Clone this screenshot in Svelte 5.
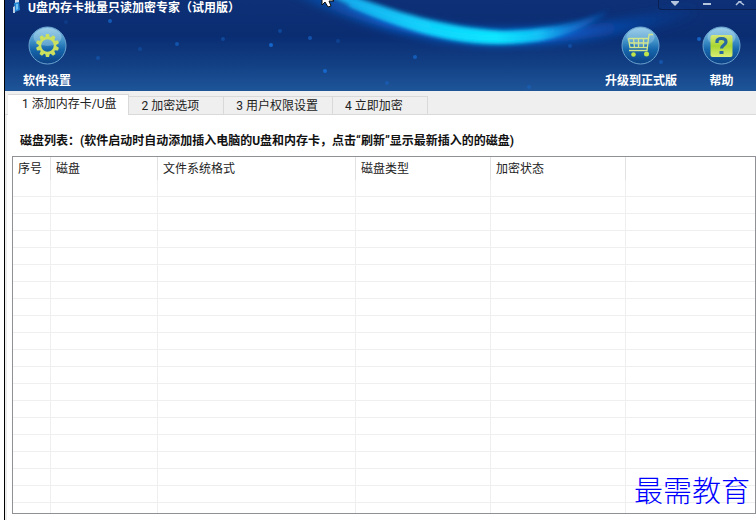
<script>
    const tabs = ['1 添加内存卡/U盘', '2 加密选项', '3 用户权限设置', '4 立即加密'];
    const columns = ['序号', '磁盘', '文件系统格式', '磁盘类型', '加密状态', ''];
    const rows = Array(19).fill('');

    // Estrellas del fondo: x, y, opacidad
    const stars = [
        [105, 21, 0.7], [172, 44, 0.6], [93, 58, 0.4], [135, 49, 0.3], [218, 39, 0.4],
        [266, 45, 0.9], [305, 38, 0.6], [275, 31, 0.4], [333, 41, 0.3], [320, 71, 0.9],
        [410, 57, 0.7], [382, 83, 0.4], [565, 46, 0.4], [524, 87, 0.4], [656, 62, 0.5],
        [694, 39, 0.8], [61, 22, 0.2]
    ];
    const teeth = [0, 36, 72, 108, 144, 180, 216, 252, 288, 324];

    let activeTab = 0;
</script>

<div class="window">
    <header>
        <svg class="sky" viewBox="0 0 751 91" preserveAspectRatio="none" aria-hidden="true">
            <defs>
                <linearGradient id="sky" x1="0" y1="0" x2="0" y2="1">
                    <stop offset="0" stop-color="#0d3076" />
                    <stop offset="0.4" stop-color="#0a2d72" />
                    <stop offset="0.7" stop-color="#123f84" />
                    <stop offset="1" stop-color="#1e5599" />
                </linearGradient>
                <linearGradient id="beam" gradientUnits="userSpaceOnUse" x1="310" y1="0" x2="610" y2="0">
                    <stop offset="0" stop-color="#159ce8" />
                    <stop offset="0.35" stop-color="#12d0fb" />
                    <stop offset="0.6" stop-color="#0fe6ff" />
                    <stop offset="0.75" stop-color="#12bff5" />
                    <stop offset="0.85" stop-color="#1784dd" stop-opacity="0.6" />
                    <stop offset="1" stop-color="#1256c4" stop-opacity="0" />
                </linearGradient>
                <linearGradient id="halo" gradientUnits="userSpaceOnUse" x1="240" y1="0" x2="700" y2="0">
                    <stop offset="0" stop-color="#0b62c4" stop-opacity="0" />
                    <stop offset="0.3" stop-color="#0a62d0" />
                    <stop offset="0.65" stop-color="#0869e0" />
                    <stop offset="1" stop-color="#1046ad" stop-opacity="0" />
                </linearGradient>
                <filter id="soft" x="-10%" y="-50%" width="120%" height="200%">
                    <feGaussianBlur stdDeviation="2" />
                </filter>
                <filter id="wide" x="-10%" y="-70%" width="120%" height="240%">
                    <feGaussianBlur stdDeviation="5" />
                </filter>
            </defs>
            <rect width="751" height="91" fill="url(#sky)" />
            <path d="M270-22Q390 36 490 37T690 10" fill="none" stroke="url(#halo)" stroke-width="14" filter="url(#wide)" />
            <path d="M304-14C365 16 430 46 500 44C550 42 580 30 615 4C575 23 545 30 498 31C430 27 375 6 322-14Z" fill="url(#beam)" filter="url(#soft)" />
            <path d="M345 4C400 26 445 38 495 38S560 34 600 14" fill="none" stroke="url(#beam)" stroke-width="5" filter="url(#soft)" />
            {#each stars as [x, y, opacity]}
                <circle cx={x} cy={y} r="2" fill="#176bd2" {opacity} />
            {/each}
        </svg>

        <div class="title-bar">
            <svg width="9" height="14" viewBox="0 0 9 14" aria-hidden="true">
                <path d="M3 0h4v3H3z" fill="#cfdded" />
                <path d="M2 3l5-1 1 8-5 2z" fill="#2386d5" />
                <path d="M1 7l2-1v7H1z" fill="#b9cce1" />
                <path d="M4 4l2 0v5l-2 1z" fill="#71c2f3" />
            </svg>
            <h1>U盘内存卡批量只读加密专家（试用版）</h1>
            <div class="controls">
                <button aria-label="菜单">
                    <svg width="10" height="8" viewBox="0 0 10 8"><path d="M1 0h8v1L5 5 1 1z" fill="#b6c5de" /></svg>
                </button>
                <button aria-label="最小化">
                    <svg width="10" height="8" viewBox="0 0 10 8"><path d="M1 2h8v2H1z" fill="#b6c5de" /></svg>
                </button>
                <button aria-label="关闭">
                    <svg width="10" height="8" viewBox="0 0 10 8"><path d="M1 4l3-3 1 0 4 3M3-1l2 2 2-2" fill="none" stroke="#b6c5de" stroke-width="1.5" /></svg>
                </button>
            </div>
        </div>

        <nav>
            <button class="tool">
                <svg width="39" height="39" viewBox="0 0 39 39" aria-hidden="true">
                    <defs>
                        <linearGradient id="ball" x1="0" y1="0" x2="0" y2="1">
                            <stop offset="0" stop-color="#8cc5e5" />
                            <stop offset="0.4" stop-color="#3d8ec6" />
                            <stop offset="0.6" stop-color="#1768ad" />
                            <stop offset="1" stop-color="#0c3f83" />
                        </linearGradient>
                        <linearGradient id="lime" x1="0" y1="0" x2="0" y2="1">
                            <stop offset="0" stop-color="#d5e779" />
                            <stop offset="0.5" stop-color="#a9d632" />
                            <stop offset="1" stop-color="#d9ed75" />
                        </linearGradient>
                    </defs>
                    <circle cx="19.5" cy="19.5" r="18.5" fill="url(#ball)" stroke="#6ba3d0" />
                    <ellipse cx="19.5" cy="11" rx="14" ry="9" fill="#c4e4f4" opacity="0.35" />
                    <g fill="#cbe05e">
                        {#each teeth as angle}
                            <path d="M18 8h3l1 4h-5z" transform="rotate({angle} 19.5 19.5)" />
                        {/each}
                    </g>
                    <circle cx="19.5" cy="19.5" r="7.500" fill="none" stroke="#cbe05e" stroke-width="2.500" />
                </svg>
                <span>软件设置</span>
            </button>
            <button class="tool upgrade">
                <svg width="39" height="39" viewBox="0 0 39 39" aria-hidden="true">
                    <circle cx="19.5" cy="19.5" r="18.5" fill="url(#ball)" stroke="#6ba3d0" />
                    <ellipse cx="19.5" cy="11" rx="14" ry="9" fill="#c4e4f4" opacity="0.3" />
                    <path d="M32 8.500h-4L26 24.500H8M7.500 12.500H27M7.500 12.500L9 21.500h17M8 17h19M12.500 12.500l1 9M17.500 12.500v9M22.500 12.500v9" fill="none" stroke="#d2e68d" stroke-width="1.300" />
                    <circle cx="12.500" cy="28.500" r="2.300" fill="#bfe54b" />
                    <circle cx="25.500" cy="28" r="2.500" fill="#bfe54b" />
                </svg>
                <span>升级到正式版</span>
            </button>
            <button class="tool">
                <svg width="39" height="39" viewBox="0 0 39 39" aria-hidden="true">
                    <circle cx="19.5" cy="19.5" r="18.5" fill="url(#ball)" stroke="#6ba3d0" />
                    <ellipse cx="19.5" cy="11" rx="14" ry="9" fill="#c4e4f4" opacity="0.35" />
                    <rect x="8.500" y="9" width="22" height="22" rx="2" fill="url(#lime)" />
                    <path d="M15 17v-1.500q0-3 4.500-3t4.500 3.500c0 3-4.500 3-4.500 6.500" fill="none" stroke="#2868a0" stroke-width="3.200" />
                    <path d="M17.500 25h4v3h-4z" fill="#2868a0" />
                </svg>
                <span>帮助</span>
            </button>
        </nav>
    </header>

    <div class="tabs" role="tablist">
        {#each tabs as tab, i}
            <button role="tab" aria-selected={activeTab === i} class:active={activeTab === i} on:click={() => activeTab = i}>
                {tab}
            </button>
        {/each}
    </div>

    <main>
        <h2>磁盘列表：(软件启动时自动添加插入电脑的U盘和内存卡，点击“刷新”显示最新插入的的磁盘)</h2>
        <div class="list">
            <table>
                <colgroup>
                    <col class="c-num" />
                    <col class="c-disk" />
                    <col class="c-format" />
                    <col class="c-type" />
                    <col class="c-type" />
                    <col />
                </colgroup>
                <thead>
                    <tr>
                        {#each columns as column}
                            <th>{column}</th>
                        {/each}
                    </tr>
                </thead>
                <tbody>
                    {#each rows as row}
                        <tr>
                            {#each columns as column}
                                <td>{row}</td>
                            {/each}
                        </tr>
                    {/each}
                    <tr class="rest">
                        {#each columns as column}
                            <td></td>
                        {/each}
                    </tr>
                </tbody>
            </table>
            <div class="watermark">最需教育</div>
        </div>
    </main>

    <svg class="pointer" width="14" height="8" viewBox="0 0 14 8" aria-hidden="true">
        <path d="M1-8V5l3-3 3 5 3-1-2-5h5z" fill="#fff" stroke="#111" />
    </svg>
</div>

<style>
    :global(body) {
        margin: 0;
        background: #fff;
    }

    .window {
        position: relative;
        display: flex;
        flex-direction: column;
        box-sizing: border-box;
        min-height: 100vh;
        margin-left: 4px;
        border-left: 1px solid #000;
        background: #fff;
        color: #222;
        font-family: Roboto, "Noto Sans CJK SC", sans-serif;
        font-size: 12px;
        line-height: 16px;
    }

    button {
        margin: 0;
        padding: 0;
        border: none;
        background: none;
        color: inherit;
        font: inherit;
        cursor: pointer;
    }

    /* CABECERA */
    header {
        position: relative;
        color: #fff;
        font-weight: bold;
    }
    .sky {
        position: absolute;
        width: 100%;
        height: 100%;
    }
    .title-bar {
        position: relative;
        display: flex;
        align-items: flex-start;
        height: 16px;
        padding-left: 7px;
    }
    h1 {
        margin: 0 0 0 7px;
        font-size: 12px;
        line-height: 16px;
    }
    .controls {
        display: flex;
        justify-content: space-around;
        width: 97px;
        height: 9px;
        margin-left: auto;
        border: 1px solid #0a2053;
        border-width: 0 0 1px 1px;
        border-bottom-left-radius: 4px;
    }
    .controls button,
    .controls svg,
    .tool svg {
        display: block;
    }
    nav {
        position: relative;
        display: flex;
        gap: 25px;
        padding: 10px 15px 2px 18px;
    }
    .tool {
        display: flex;
        flex-direction: column;
        align-items: center;
        gap: 8px;
    }
    .upgrade {
        margin-left: auto;
    }

    /* PESTAÑAS */
    .tabs {
        display: flex;
        align-items: flex-end;
        height: 22px;
        padding: 2px 0 0 3px;
        background: #efefef;
        box-shadow: inset 0 -1px #d9d9d9;
    }
    .tabs button {
        height: 19px;
        padding: 0 14px 0 12px;
        border: 1px solid #d9d9d9;
        border-left: none;
        white-space: nowrap;
    }
    .tabs button:nth-child(even) {
        padding-right: 24px;
    }
    .tabs button.active {
        height: 21px;
        padding: 0 12px 2px 14px;
        border-bottom: none;
        background: #fff;
    }

    /* LISTA DE DISCOS */
    main {
        flex: 1;
        display: flex;
        flex-direction: column;
        padding: 18px 0 6px 5px;
        border-left: 2px solid #ececec;
    }
    h2 {
        margin: 0 0 7px 8px;
        color: #111;
        font-size: 12px;
        line-height: 16px;
    }
    .list {
        position: relative;
        flex: 1;
        border: 1px solid #8f9196;
    }
    table {
        width: 100%;
        table-layout: fixed;
        border-collapse: separate;
        border-spacing: 0;
    }
    .c-num { width: 38px; }
    .c-disk { width: 107px; }
    .c-format { width: 198px; }
    .c-type { width: 135px; }
    th {
        height: 23px;
        padding: 0 0 0 5px;
        box-sizing: border-box;
        border-right: 1px solid #e2e2e2;
        font-weight: normal;
        text-align: left;
        white-space: nowrap;
    }
    td {
        box-sizing: border-box;
        height: 17px;
        padding: 0;
        border-right: 1px solid #efefef;
        border-bottom: 1px solid #efefef;
    }
    th:last-child,
    td:last-child {
        border-right: none;
    }
    .rest td {
        height: 10px;
        border-bottom: none;
    }
    .watermark {
        position: absolute;
        right: 5px;
        bottom: 8px;
        color: #00f;
        font-family: "Noto Sans CJK SC", sans-serif;
        font-size: 29px;
        font-weight: 300;
        line-height: 32px;
    }

    .pointer {
        position: absolute;
        top: 0;
        left: 316px;
    }
</style>
